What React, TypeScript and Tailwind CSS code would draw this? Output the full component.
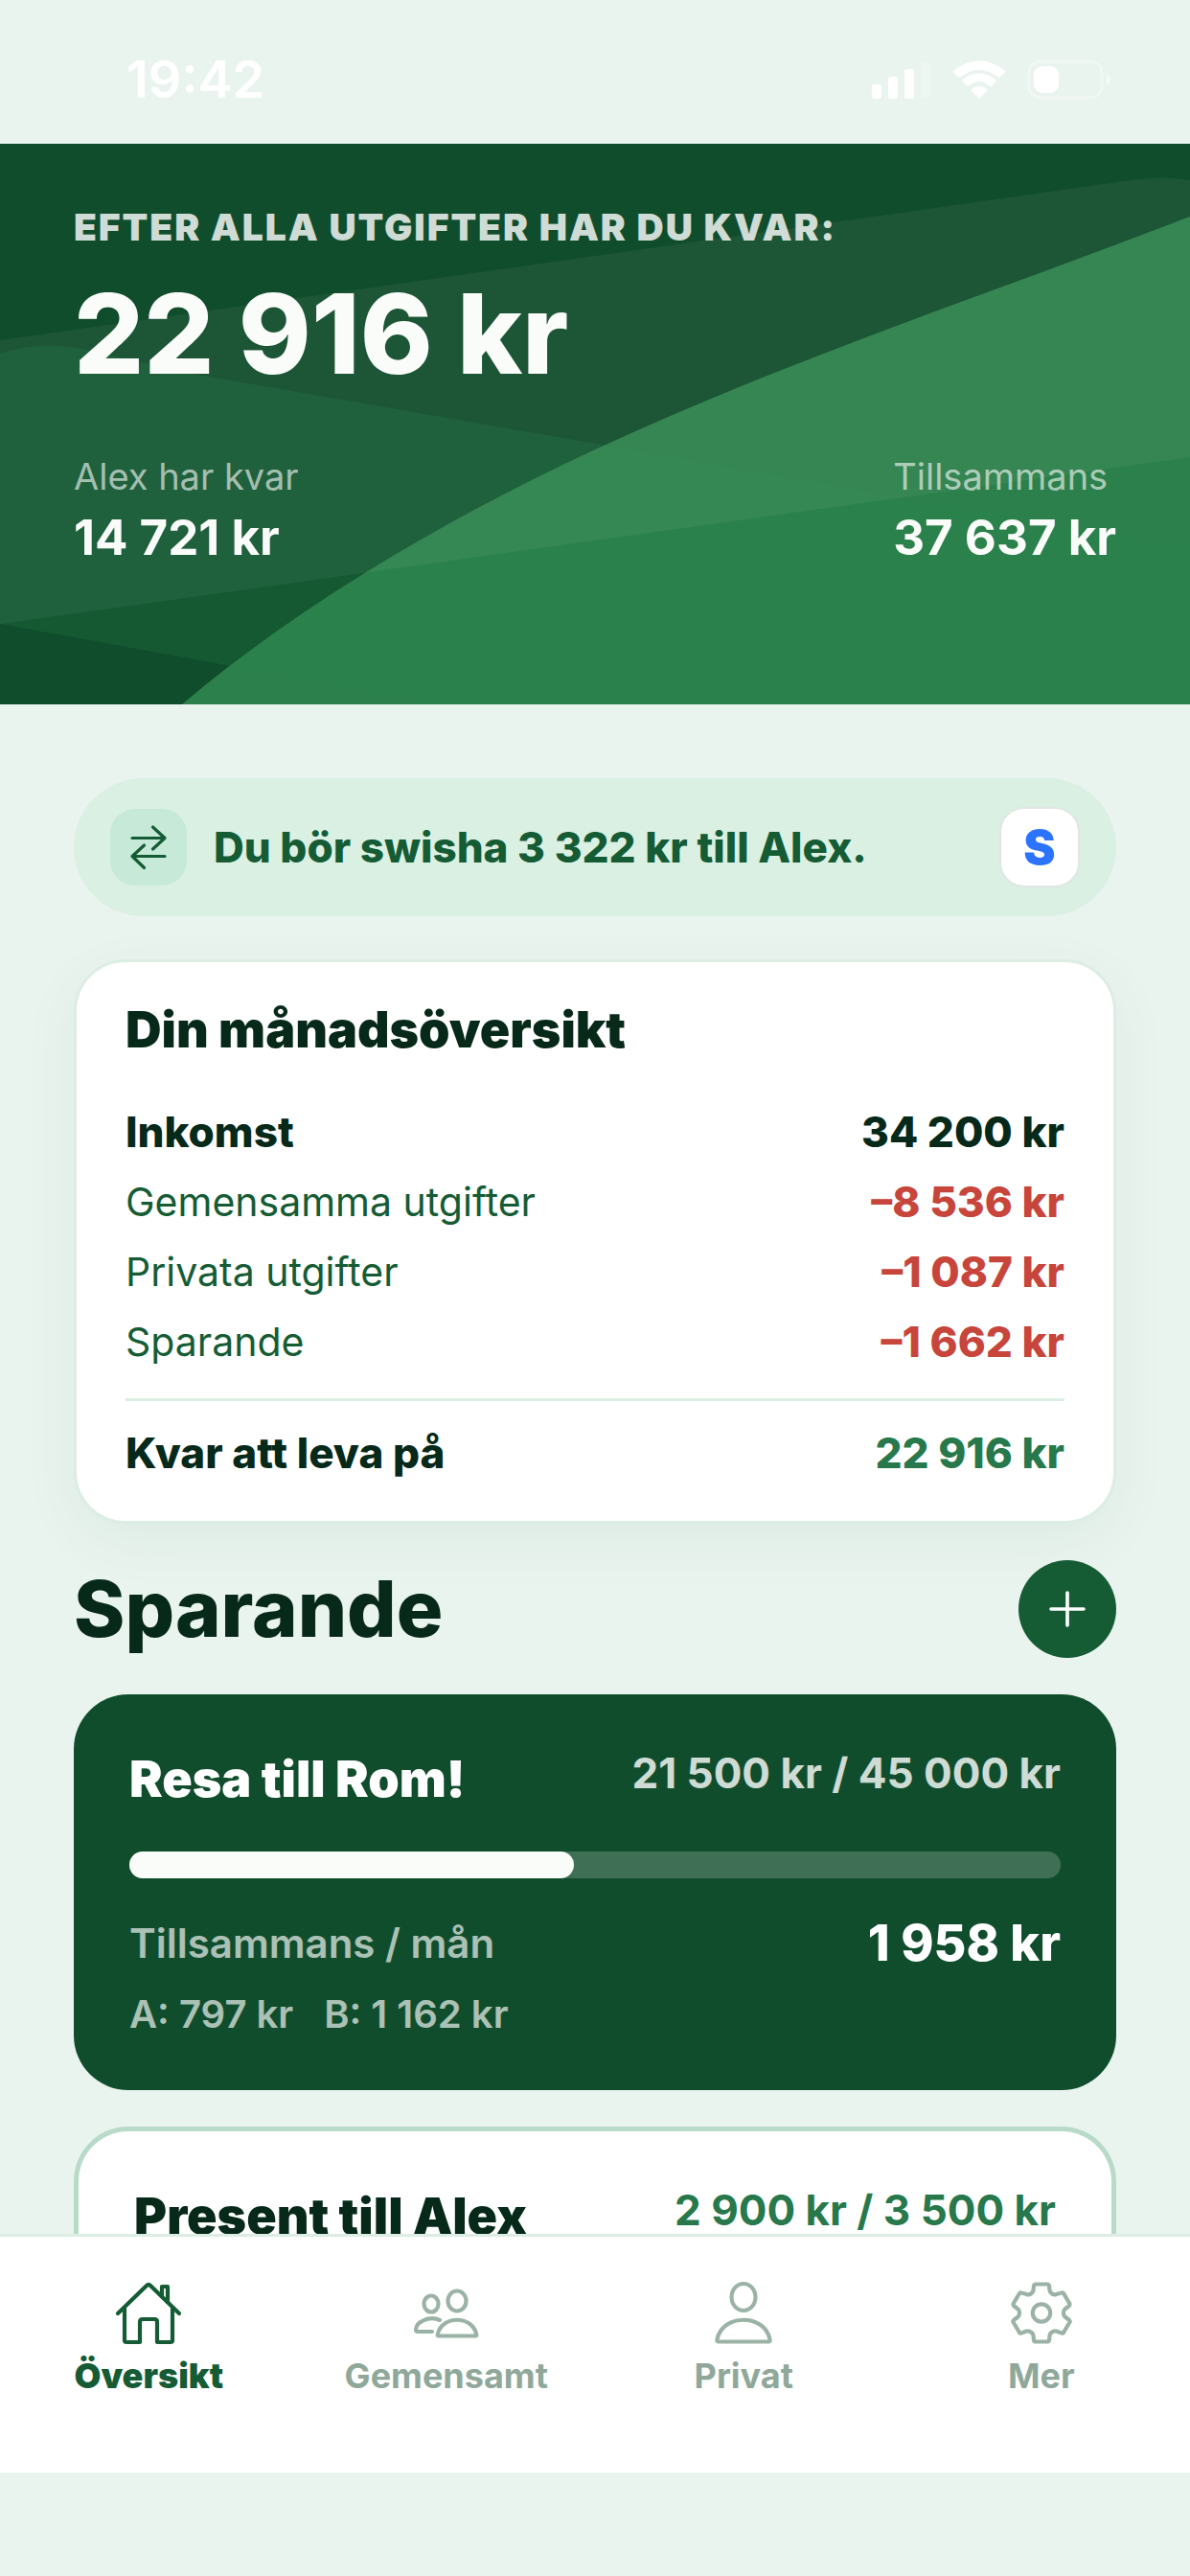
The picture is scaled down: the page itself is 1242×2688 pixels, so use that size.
import type {ReactNode} from 'react';

const overviewRows = [
  {label: 'Gemensamma utgifter', amount: '–8 536 kr'},
  {label: 'Privata utgifter', amount: '–1 087 kr'},
  {label: 'Sparande', amount: '–1 662 kr'}
];

function StatusBar() {
  return (
    <div className="flex h-[150px] shrink-0 items-center justify-between pt-4 pr-[82px] pl-[132px] text-white">
      <span className="text-[54px] leading-none font-semibold">19:42</span>
      <svg viewBox="0 0 250 42" className="h-[42px] w-[250px]" fill="currentColor" aria-hidden="true">
        <rect x="0" y="26" width="10" height="15" rx="3" />
        <rect x="17" y="18" width="10" height="23" rx="3" />
        <rect x="34" y="10" width="10" height="31" rx="3" />
        <rect x="51" y="2" width="10" height="39" rx="3" opacity="0.2" />
        <path d="M86 11Q112 -8 138 11Q140 13 138 14L134 18Q133 19 131 18Q112 4 93 18Q91 19 90 18L86 14Q84 13 86 11z" />
        <path d="M95 21Q112 8 129 21Q130 22 129 23L125 28Q124 28 122 27Q112 19 102 27Q100 28 99 28L95 23Q94 22 95 21z" />
        <path d="M104 31Q112 25 120 31Q121 32 120 33L113 40Q112 41 111 40L104 33Q103 32 104 31z" />
        <rect x="164" y="2" width="76" height="38" rx="12" fill="none" stroke="currentColor" strokeWidth="3" opacity="0.3" />
        <rect x="169" y="7" width="26" height="28" rx="9" />
        <path d="M245 15q8 6 0 12z" opacity="0.5" />
      </svg>
    </div>
  );
}

function HeaderWaves() {
  return (
    <svg
      viewBox="0 0 1242 585"
      preserveAspectRatio="none"
      className="absolute inset-0 h-full w-full"
      aria-hidden="true"
    >
      <rect width="1242" height="585" fill="#104d2c" />
      <path d="M190 585C320 475 480 384 630 315C830 223 1040 154 1242 76V585z" fill="#2c804b" />
      <path d="M0 219Q50 202 110 220L206 241L634 315L982 376L1242 422V585H460L0 501z" fill="#28834f" fillOpacity="0.22" />
      <path d="M0 205L1180 38Q1215 33 1242 38V327L0 501z" fill="#fff" fillOpacity="0.05" />
    </svg>
  );
}

function Remaining({label, amount}: {label: string; amount: string}) {
  return (
    <div>
      <p className="text-[38px] leading-[46px] text-white/60">{label}</p>
      <p className="mt-[10px] text-[51px] leading-[62px] font-bold">{amount}</p>
    </div>
  );
}

function Header() {
  return (
    <header className="relative h-[585px] shrink-0 px-[77px] pt-16 text-[#fafcfa]">
      <HeaderWaves />
      <div className="relative">
        <h1 className="text-[39px] leading-[46px] font-black tracking-wider text-white/80 uppercase">
          Efter alla utgifter har du kvar:
        </h1>
        <p className="mt-5 text-[115px] leading-[138px] font-extrabold">22 916 kr</p>
        <div className="mt-14 flex justify-between">
          <Remaining label="Alex har kvar" amount="14 721 kr" />
          <Remaining label="Tillsammans" amount="37 637 kr" />
        </div>
      </div>
    </header>
  );
}

function SwishBanner() {
  return (
    <div className="flex h-36 items-center rounded-[72px] bg-[#daf0e3] px-[38px]">
      <div className="flex size-20 items-center justify-center rounded-[26px] bg-[#c6ead7] text-[#155c35]">
        <svg
          viewBox="0 0 40 50"
          className="h-[50px] w-10"
          fill="none"
          stroke="currentColor"
          strokeWidth="3.2"
          strokeLinecap="round"
          strokeLinejoin="round"
          aria-hidden="true"
        >
          <path d="M3 15.5H37L24.5 4M37 15.5L24.5 27" />
          <path d="M37 34.5H3L15.5 23M3 34.5L15.5 46.5" />
        </svg>
      </div>
      <p className="ml-7 flex-1 text-[44px] leading-[52px] font-extrabold text-[#155c35]">
        Du bör swisha 3 322 kr till Alex.
      </p>
      <button
        type="button"
        aria-label="Swish"
        className="flex size-[84px] items-center justify-center rounded-[26px] border-2 border-[#e0e6e3] bg-white text-[50px] font-black text-[#2c74ff]"
      >
        S
      </button>
    </div>
  );
}

function OverviewCard() {
  return (
    <section className="mt-[45px] rounded-[54px] border-[3px] border-[#dcede4] bg-white px-[51px] pt-[39px] pb-9 shadow-[0_18px_60px_rgba(16,77,44,0.06)]">
      <h2 className="text-[52px] leading-[64px] font-black text-[#06291a]">Din månadsöversikt</h2>
      <dl className="mt-[38px] text-[44px] leading-[53px]">
        <div className="flex justify-between py-[10px] font-extrabold text-[#06291a]">
          <dt>Inkomst</dt>
          <dd>34 200 kr</dd>
        </div>
        {overviewRows.map((row) => (
          <div key={row.label} className="flex justify-between py-[10px]">
            <dt className="text-[41px] text-[#155c35]">{row.label}</dt>
            <dd className="font-extrabold text-[#c7453a]">{row.amount}</dd>
          </div>
        ))}
        <div className="mt-[22px] flex justify-between border-t-[3px] border-[#dcede4] pt-7 pb-2 font-extrabold text-[#06291a]">
          <dt>Kvar att leva på</dt>
          <dd className="text-[#27784a]">22 916 kr</dd>
        </div>
      </dl>
    </section>
  );
}

function GoalCard() {
  return (
    <article className="mt-[38px] rounded-[57px] bg-[#104d2c] px-[58px] pt-14 pb-[53px] text-white">
      <div className="flex items-start justify-between">
        <h3 className="pt-1 text-[52px] leading-[58px] font-black">Resa till Rom!</h3>
        <p className="text-[44px] leading-[52px] font-bold text-white/80">21 500 kr / 45 000 kr</p>
      </div>
      <div className="mt-[46px] h-7 rounded-full bg-white/20">
        <div className="h-full rounded-full bg-[#fafcfa]" style={{width: `${(21500 / 45000) * 100}%`}} />
      </div>
      <div className="mt-[39px] flex items-center justify-between">
        <p className="text-[42px] leading-[58px] font-semibold text-white/65">Tillsammans / mån</p>
        <p className="text-[52px] leading-[58px] font-extrabold">1 958 kr</p>
      </div>
      <p className="mt-[19px] flex gap-8 text-[40px] leading-[52px] font-semibold text-white/65">
        <span>A: 797 kr</span>
        <span>B: 1 162 kr</span>
      </p>
    </article>
  );
}

function NextGoalCard() {
  return (
    <article className="mt-[38px] rounded-t-[57px] border-x-[5px] border-t-[5px] border-[#b8dac9] bg-white px-[58px] pt-14">
      <div className="flex items-start justify-between">
        <h3 className="pt-1 text-[52px] leading-[58px] font-black text-[#06291a]">Present till Alex</h3>
        <p className="text-[44px] leading-[52px] font-bold text-[#27784a]">2 900 kr / 3 500 kr</p>
      </div>
    </article>
  );
}

function NavItem({label, active, children}: {label: string; active?: boolean; children: ReactNode}) {
  return (
    <a
      href="#"
      aria-current={active ? 'page' : undefined}
      className={
        active
          ? 'flex flex-1 flex-col items-center font-black text-[#155c35]'
          : 'flex flex-1 flex-col items-center font-bold text-[#8fa89a]'
      }
    >
      <svg
        viewBox="0 0 72 72"
        className={active ? 'size-[72px]' : 'size-[72px] text-[#9bb3a6]'}
        fill="none"
        stroke="currentColor"
        strokeWidth="4.2"
        strokeLinecap="round"
        strokeLinejoin="round"
        aria-hidden="true"
      >
        {children}
      </svg>
      <span className="mt-1 text-[36px] leading-[46px]">{label}</span>
    </a>
  );
}

function BottomNav() {
  return (
    <nav className="flex h-[249px] shrink-0 border-t-[3px] border-[#dcede4] bg-white pt-[46px]">
      <NavItem label="Översikt" active>
        <path d="M4 34L34 5Q36 3 38 5L68 34" />
        <path d="M11 29V62Q11 64 13 64H27V43Q27 40 30 40H42Q45 40 45 43V64H59Q61 64 61 62V29" />
        <path d="M50 16V6H56V22" />
      </NavItem>
      <NavItem label="Gemensamt">
        <ellipse cx="20" cy="24" rx="7.5" ry="8.5" />
        <ellipse cx="47" cy="21" rx="9.5" ry="10.5" />
        <path d="M29 41C18 36 4 43 4 51Q4 53 6 53H21" />
        <path d="M28 57.5Q26 57.5 27 55C32 36 62 36 67 55Q68 57.5 66 57.5z" />
      </NavItem>
      <NavItem label="Privat">
        <ellipse cx="36" cy="17" rx="12.5" ry="14" />
        <path d="M10 63.5Q8 63.5 8.5 61C14 34 58 34 63.5 61Q64 63.5 62 63.5z" />
      </NavItem>
      <NavItem label="Mer">
        <circle cx="36" cy="33.5" r="9.2" />
        <path d="M30 3.5H42Q43.5 3.5 44 5L44.5 10Q45 12.5 47 13.5Q49 15 51.5 14L57 12.5Q58.5 12 59 13L65.5 24Q66 25 65 26L60.5 29.5Q59 30.5 59 33.5Q59 36.5 60.5 37.5L65 41Q66 42 65.5 43L59 54Q58.5 55 57 54.5L51.5 52.5Q49 52 47 53.5Q45 54.5 44.5 57L44 62Q43.5 63.5 42 63.5H30Q28.5 63.5 28 62L27.5 57Q27 54.5 25 53.5Q23 52 20.5 52.5L15 54.5Q13.5 55 13 54L6.5 43Q6 42 7 41L11.5 37.5Q13 36.5 13 33.5Q13 30.5 11.5 29.5L7 26Q6 25 6.5 24L13 13Q13.5 12 15 12.5L20.5 14Q23 15 25 13.5Q27 12.5 27.5 10L28 5Q28.5 3.5 30 3.5z" />
      </NavItem>
    </nav>
  );
}

export default function App() {
  return (
    <div className="flex h-screen flex-col overflow-hidden bg-[#eaf4ef] font-[Inter,sans-serif]">
      <StatusBar />
      <Header />
      <main className="min-h-0 flex-1 overflow-hidden px-[77px] pt-[77px]">
        <SwishBanner />
        <OverviewCard />
        <div className="mt-[38px] flex items-center justify-between">
          <h2 className="text-[81px] leading-[96px] font-extrabold text-[#06291a]">Sparande</h2>
          <button
            type="button"
            aria-label="Lägg till sparmål"
            className="flex size-[102px] items-center justify-center rounded-full bg-[#155c35] text-white"
          >
            <svg viewBox="0 0 40 40" className="size-10" stroke="currentColor" strokeWidth="3.6" strokeLinecap="round" aria-hidden="true">
              <path d="M20 3V37M3 20H37" />
            </svg>
          </button>
        </div>
        <GoalCard />
        <NextGoalCard />
      </main>
      <BottomNav />
      <div className="h-[108px] shrink-0" />
    </div>
  );
}
